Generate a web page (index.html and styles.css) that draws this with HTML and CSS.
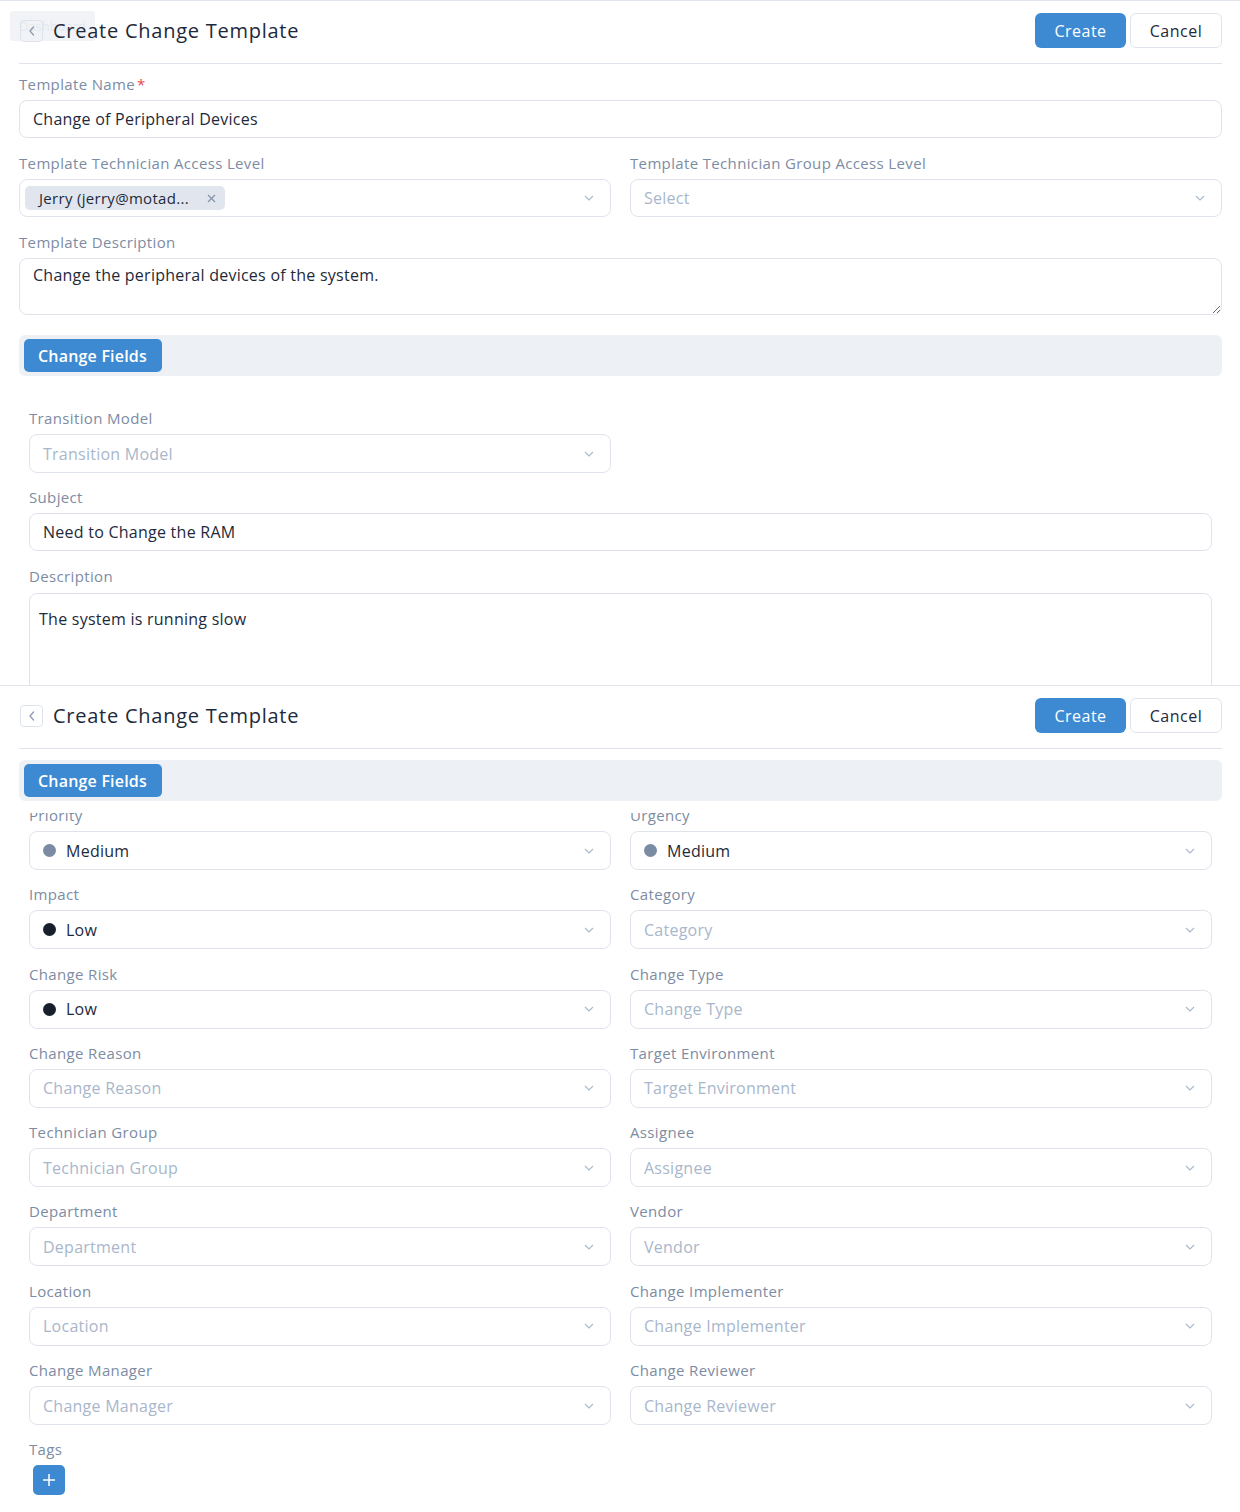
FILE: index.html
```html
<!DOCTYPE html>
<html lang="en">
<head>
<meta charset="utf-8">
<title>Create Change Template</title>
<link rel="stylesheet" href="styles.css">
</head>
<body>

<section class="screen screen-top">
  <header class="page-head">
    <div class="tip">Dashboard</div>
    <button class="back" aria-label="Back"><svg width="10" height="12" viewBox="0 0 10 12"><path d="M6.5 2 L3 6 L6.5 10" fill="none" stroke="#8d9cb2" stroke-width="1.3" stroke-linecap="round" stroke-linejoin="round"/></svg></button>
    <h1 class="title">Create Change Template</h1>
    <div class="actions">
      <button class="btn btn-primary">Create</button>
      <button class="btn btn-default">Cancel</button>
    </div>
  </header>

  <div class="form">
    <div class="field">
      <label class="label">Template Name<span class="req">*</span></label>
      <div class="input">Change of Peripheral Devices</div>
    </div>
    <div class="cols">
      <div class="field">
        <label class="label">Template Technician Access Level</label>
        <div class="select select-tags">
          <span class="tag">Jerry (jerry@motad...<svg class="tag-x" width="9" height="9" viewBox="0 0 9 9"><path d="M1 1 L8 8 M8 1 L1 8" stroke="#8593a8" stroke-width="1.2"/></svg></span>
          <svg class="chev" width="10" height="6" viewBox="0 0 10 6"><path d="M1 1 L5 5 L9 1" fill="none" stroke="#a9b8cc" stroke-width="1.1"/></svg>
        </div>
      </div>
      <div class="field">
        <label class="label">Template Technician Group Access Level</label>
        <div class="select"><span class="ph">Select</span><svg class="chev" width="10" height="6" viewBox="0 0 10 6"><path d="M1 1 L5 5 L9 1" fill="none" stroke="#a9b8cc" stroke-width="1.1"/></svg></div>
      </div>
    </div>
    <div class="field">
      <label class="label">Template Description</label>
      <textarea class="textarea">Change the peripheral devices of the system.</textarea>
    </div>

    <div class="tabbar tabbar-top"><button class="tab">Change Fields</button></div>

    <div class="fields fields-top">
      <div class="field">
        <label class="label">Transition Model</label>
        <div class="select"><span class="ph">Transition Model</span><svg class="chev" width="10" height="6" viewBox="0 0 10 6"><path d="M1 1 L5 5 L9 1" fill="none" stroke="#a9b8cc" stroke-width="1.1"/></svg></div>
      </div>
      <div class="field span2">
        <label class="label">Subject</label>
        <div class="input">Need to Change the RAM</div>
      </div>
      <div class="field span2">
        <label class="label">Description</label>
        <div class="editor">The system is running slow</div>
      </div>
    </div>
  </div>
</section>

<section class="screen screen-bottom">
  <header class="page-head">
    <button class="back" aria-label="Back"><svg width="10" height="12" viewBox="0 0 10 12"><path d="M6.5 2 L3 6 L6.5 10" fill="none" stroke="#8d9cb2" stroke-width="1.3" stroke-linecap="round" stroke-linejoin="round"/></svg></button>
    <h1 class="title">Create Change Template</h1>
    <div class="actions">
      <button class="btn btn-primary">Create</button>
      <button class="btn btn-default">Cancel</button>
    </div>
  </header>

  <div class="tabwrap"><div class="tabbar"><button class="tab">Change Fields</button></div></div>

  <div class="scroll">
    <div class="fields fields-bottom">
      <div class="field">
        <label class="label">Priority</label>
        <div class="select"><span class="dot dot-medium"></span><span class="val">Medium</span><svg class="chev" width="10" height="6" viewBox="0 0 10 6"><path d="M1 1 L5 5 L9 1" fill="none" stroke="#a9b8cc" stroke-width="1.1"/></svg></div>
      </div>
      <div class="field">
        <label class="label">Urgency</label>
        <div class="select"><span class="dot dot-medium"></span><span class="val">Medium</span><svg class="chev" width="10" height="6" viewBox="0 0 10 6"><path d="M1 1 L5 5 L9 1" fill="none" stroke="#a9b8cc" stroke-width="1.1"/></svg></div>
      </div>
      <div class="field">
        <label class="label">Impact</label>
        <div class="select"><span class="dot dot-low"></span><span class="val">Low</span><svg class="chev" width="10" height="6" viewBox="0 0 10 6"><path d="M1 1 L5 5 L9 1" fill="none" stroke="#a9b8cc" stroke-width="1.1"/></svg></div>
      </div>
      <div class="field">
        <label class="label">Category</label>
        <div class="select"><span class="ph">Category</span><svg class="chev" width="10" height="6" viewBox="0 0 10 6"><path d="M1 1 L5 5 L9 1" fill="none" stroke="#a9b8cc" stroke-width="1.1"/></svg></div>
      </div>
      <div class="field">
        <label class="label">Change Risk</label>
        <div class="select"><span class="dot dot-low"></span><span class="val">Low</span><svg class="chev" width="10" height="6" viewBox="0 0 10 6"><path d="M1 1 L5 5 L9 1" fill="none" stroke="#a9b8cc" stroke-width="1.1"/></svg></div>
      </div>
      <div class="field">
        <label class="label">Change Type</label>
        <div class="select"><span class="ph">Change Type</span><svg class="chev" width="10" height="6" viewBox="0 0 10 6"><path d="M1 1 L5 5 L9 1" fill="none" stroke="#a9b8cc" stroke-width="1.1"/></svg></div>
      </div>
      <div class="field">
        <label class="label">Change Reason</label>
        <div class="select"><span class="ph">Change Reason</span><svg class="chev" width="10" height="6" viewBox="0 0 10 6"><path d="M1 1 L5 5 L9 1" fill="none" stroke="#a9b8cc" stroke-width="1.1"/></svg></div>
      </div>
      <div class="field">
        <label class="label">Target Environment</label>
        <div class="select"><span class="ph">Target Environment</span><svg class="chev" width="10" height="6" viewBox="0 0 10 6"><path d="M1 1 L5 5 L9 1" fill="none" stroke="#a9b8cc" stroke-width="1.1"/></svg></div>
      </div>
      <div class="field">
        <label class="label">Technician Group</label>
        <div class="select"><span class="ph">Technician Group</span><svg class="chev" width="10" height="6" viewBox="0 0 10 6"><path d="M1 1 L5 5 L9 1" fill="none" stroke="#a9b8cc" stroke-width="1.1"/></svg></div>
      </div>
      <div class="field">
        <label class="label">Assignee</label>
        <div class="select"><span class="ph">Assignee</span><svg class="chev" width="10" height="6" viewBox="0 0 10 6"><path d="M1 1 L5 5 L9 1" fill="none" stroke="#a9b8cc" stroke-width="1.1"/></svg></div>
      </div>
      <div class="field">
        <label class="label">Department</label>
        <div class="select"><span class="ph">Department</span><svg class="chev" width="10" height="6" viewBox="0 0 10 6"><path d="M1 1 L5 5 L9 1" fill="none" stroke="#a9b8cc" stroke-width="1.1"/></svg></div>
      </div>
      <div class="field">
        <label class="label">Vendor</label>
        <div class="select"><span class="ph">Vendor</span><svg class="chev" width="10" height="6" viewBox="0 0 10 6"><path d="M1 1 L5 5 L9 1" fill="none" stroke="#a9b8cc" stroke-width="1.1"/></svg></div>
      </div>
      <div class="field">
        <label class="label">Location</label>
        <div class="select"><span class="ph">Location</span><svg class="chev" width="10" height="6" viewBox="0 0 10 6"><path d="M1 1 L5 5 L9 1" fill="none" stroke="#a9b8cc" stroke-width="1.1"/></svg></div>
      </div>
      <div class="field">
        <label class="label">Change Implementer</label>
        <div class="select"><span class="ph">Change Implementer</span><svg class="chev" width="10" height="6" viewBox="0 0 10 6"><path d="M1 1 L5 5 L9 1" fill="none" stroke="#a9b8cc" stroke-width="1.1"/></svg></div>
      </div>
      <div class="field">
        <label class="label">Change Manager</label>
        <div class="select"><span class="ph">Change Manager</span><svg class="chev" width="10" height="6" viewBox="0 0 10 6"><path d="M1 1 L5 5 L9 1" fill="none" stroke="#a9b8cc" stroke-width="1.1"/></svg></div>
      </div>
      <div class="field">
        <label class="label">Change Reviewer</label>
        <div class="select"><span class="ph">Change Reviewer</span><svg class="chev" width="10" height="6" viewBox="0 0 10 6"><path d="M1 1 L5 5 L9 1" fill="none" stroke="#a9b8cc" stroke-width="1.1"/></svg></div>
      </div>
      <div class="field span2">
        <label class="label">Tags</label>
        <button class="add-tag" aria-label="Add tag"><svg width="14" height="14" viewBox="0 0 14 14"><path d="M7 1 V13 M1 7 H13" stroke="#fff" stroke-width="1.5"/></svg></button>
      </div>
    </div>
  </div>
</section>

<script src="script.js"></script>
</body>
</html>
```

FILE: styles.css
```css
* { box-sizing: border-box; margin: 0; padding: 0; }

body {
  margin: 0;
  width: 1240px;
  background: #fff;
  color: #1e2a3b;
  font-family: "Open Sans", "Liberation Sans", sans-serif;
  font-size: 15px;
}

button { font-family: inherit; cursor: pointer; }

.screen {
  border-top: 1px solid #e0e5ed;
  padding: 0 18px 0 19px;
  overflow: hidden;
}
.screen-top { height: 685px; }
.screen-bottom { height: 827px; display: flex; flex-direction: column; }

/* header */
.page-head {
  position: relative;
  z-index: 0;
  display: flex;
  align-items: center;
  padding: 12px 0 15px;
  border-bottom: 1px solid #dfe4ec;
}
.tip {
  position: absolute;
  z-index: -1;
  left: -9px;
  top: 10px;
  width: 85px;
  height: 30px;
  border-radius: 3px;
  background: #f1f3f6;
  color: #e4e8ee;
  font-size: 13px;
  line-height: 30px;
  text-align: center;
}
.back {
  width: 23px;
  height: 22px;
  margin-left: 1px;
  border: 1px solid #dfe4ec;
  border-radius: 4px;
  background: transparent;
  display: flex;
  align-items: center;
  justify-content: center;
}
.title {
  margin-left: 10px;
  font-size: 20px;
  font-weight: 500;
  letter-spacing: 0.75px;
  color: #1e2a3b;
  flex: 1;
}
.actions { display: flex; gap: 4px; }
.btn {
  height: 35px;
  border-radius: 6px;
  font-size: 16px;
  letter-spacing: 0.5px;
}
.btn-primary {
  width: 91px;
  border: 0;
  background: #3d8ad3;
  color: #fff;
}
.btn-default {
  width: 92px;
  border: 1px solid #dfe4ec;
  background: #fff;
  color: #1e2a3b;
}

/* form */
.form {
  display: flex;
  flex-direction: column;
  gap: 14px;
  padding-top: 9px;
}
.cols {
  display: grid;
  grid-template-columns: 1fr 1fr;
  column-gap: 19px;
}
.field {
  display: flex;
  flex-direction: column;
  gap: 5px;
  min-width: 0;
}
.label {
  font-size: 15px;
  line-height: 22px;
  letter-spacing: 0.35px;
  color: #7d8ca3;
}
.req { color: #e5484d; margin-left: 2px; }

.input, .select {
  height: 38px;
  border: 1px solid #dfe4ec;
  border-radius: 8px;
  padding: 0 13px;
  display: flex;
  align-items: center;
  font-size: 16px;
  letter-spacing: 0.25px;
  color: #1e2a3b;
  background: #fff;
}
.select { position: relative; }
.select .chev { margin-left: auto; margin-right: 3px; flex: none; }
.ph { color: #a8b7cb; }
.val { color: #1e2a3b; }

.select-tags { padding-left: 5px; }
.tag {
  display: inline-flex;
  align-items: center;
  height: 24px;
  padding: 0 9px 0 14px;
  border-radius: 5px;
  background: #e1e6ee;
  color: #1e2a3b;
  font-size: 15px;
  letter-spacing: 0.3px;
  gap: 18px;
}

.textarea {
  height: 57px;
  border: 1px solid #dfe4ec;
  border-radius: 8px;
  padding: 5px 13px;
  font-family: inherit;
  font-size: 16px;
  letter-spacing: 0.25px;
  line-height: 22px;
  color: #1e2a3b;
  resize: vertical;
  outline: none;
}

/* tab bar */
.tabbar {
  height: 41px;
  padding: 3px 5px;
  border-radius: 6px;
  background: #edf0f5;
  display: flex;
  align-items: center;
}
.tabbar-top { margin-top: 6px; }
.tab {
  height: 33px;
  padding: 0 15px 0 14px;
  border: 0;
  border-radius: 5px;
  background: #3d8ad3;
  color: #fff;
  font-size: 16px;
  font-weight: 600;
  letter-spacing: 0.2px;
}
.tabwrap {
  flex: none;
  padding: 11px 0 12px;
  background: #fff;
}

/* fields grid */
.fields {
  display: grid;
  grid-template-columns: 1fr 1fr;
  column-gap: 19px;
  row-gap: 13.3px;
  padding: 0 10px;
}
.fields-top { padding-top: 17px; }
.fields .select { height: 39px; }
.span2 { grid-column: 1 / -1; }

.editor {
  height: 120px;
  margin-top: 1px;
  border: 1px solid #dfe4ec;
  border-radius: 8px;
  padding: 14px 9px;
  font-size: 16px;
  letter-spacing: 0.25px;
  line-height: 22px;
  color: #1e2a3b;
}

.dot {
  width: 13px;
  height: 13px;
  border-radius: 50%;
  margin-right: 10px;
  flex: none;
}
.dot-medium { background: #7b8ba3; }
.dot-low { background: #18202d; }

.scroll {
  flex: 1;
  min-height: 0;
  overflow: hidden;
}
.fields-bottom { padding-bottom: 60px; }

.add-tag {
  width: 32px;
  height: 30px;
  margin-left: 4px;
  border: 0;
  border-radius: 5px;
  background: #3d8ad3;
  display: flex;
  align-items: center;
  justify-content: center;
}
```

FILE: script.js
```js
document.querySelectorAll('.scroll').forEach(function (el) {
  el.scrollTop = 9;
});
```
